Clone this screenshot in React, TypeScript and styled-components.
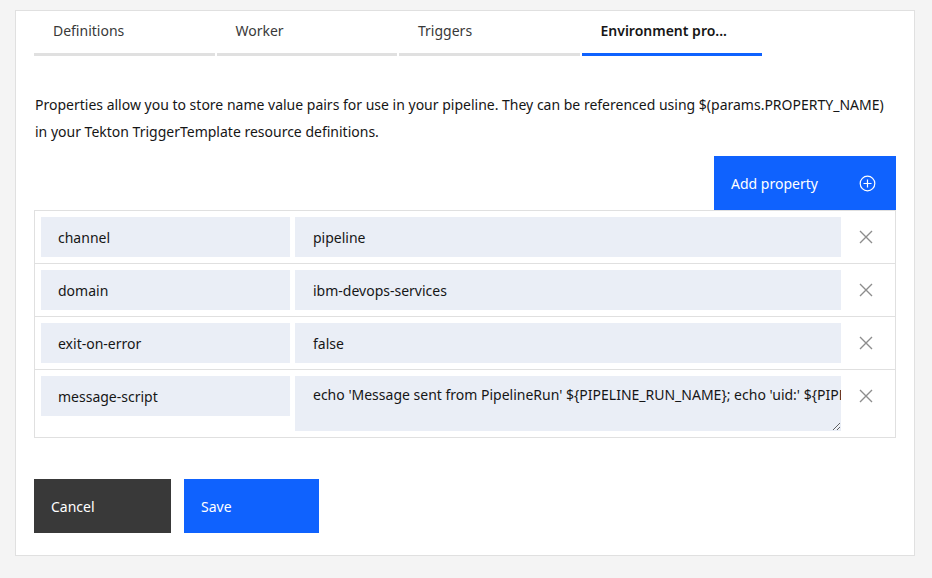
import React from "react";
import styled, { createGlobalStyle } from "styled-components";

const GlobalStyle = createGlobalStyle`
  html, body {
    margin: 0;
    padding: 0;
    background: #f4f4f4;
    font-family: "Noto Sans", "Open Sans", sans-serif;
    color: #161616;
  }
  * {
    box-sizing: border-box;
  }
`;

interface Property {
  name: string;
  value: string;
  multiline?: boolean;
}

const tabs = ["Definitions", "Worker", "Triggers", "Environment pro..."];

const properties: Property[] = [
  { name: "channel", value: "pipeline" },
  { name: "domain", value: "ibm-devops-services" },
  { name: "exit-on-error", value: "false" },
  {
    name: "message-script",
    value:
      "echo 'Message sent from PipelineRun' ${PIPELINE_RUN_NAME}; echo 'uid:' ${PIPELINE_RUN_ID}",
    multiline: true,
  },
];

function CloseIcon() {
  return (
    <svg width="16" height="16" viewBox="0 0 16 16" fill="none">
      <path d="M2 2L14 14M14 2L2 14" stroke="#8d8d8d" strokeWidth="1.4" />
    </svg>
  );
}

function AddIcon() {
  return (
    <svg width="17" height="17" viewBox="0 0 17 17" fill="none">
      <circle cx="8.5" cy="8.5" r="7.3" stroke="white" strokeWidth="1.2" />
      <path d="M8.5 4.5V12.5M4.5 8.5H12.5" stroke="white" strokeWidth="1.2" />
    </svg>
  );
}

export default function App() {
  return (
    <>
      <GlobalStyle />
      <Page>
        <Card>
          <TabList>
            {tabs.map((t, i) => (
              <Tab key={t} $active={i === 3}>
                {t}
              </Tab>
            ))}
          </TabList>
          <Description>
            Properties allow you to store name value pairs for use in your
            pipeline. They can be referenced using $(params.PROPERTY_NAME) in
            your Tekton TriggerTemplate resource definitions.
          </Description>
          <Toolbar>
            <AddButton>
              Add property
              <AddIcon />
            </AddButton>
          </Toolbar>
          <Table>
            {properties.map((p) => (
              <Row key={p.name}>
                <NameField>{p.name}</NameField>
                {p.multiline ? (
                  <ValueArea wrap="off" readOnly value={p.value} />
                ) : (
                  <ValueField>{p.value}</ValueField>
                )}
                <RemoveButton>
                  <CloseIcon />
                </RemoveButton>
              </Row>
            ))}
          </Table>
          <Actions>
            <ActionButton $kind="secondary">Cancel</ActionButton>
            <ActionButton $kind="primary">Save</ActionButton>
          </Actions>
        </Card>
      </Page>
    </>
  );
}

const Page = styled.div`
  padding: 10px 17px 22px 15px;
`;

const Card = styled.div`
  width: 900px;
  background: #ffffff;
  border: 1px solid #e0e0e0;
  padding: 0 18px 22px 18px;
`;

const TabList = styled.div`
  display: flex;
  gap: 2px;
`;

const Tab = styled.div<{ $active?: boolean }>`
  width: 180.5px;
  height: 45px;
  padding: 10px 0 0 19px;
  font-size: 14px;
  line-height: 20px;
  color: ${(p) => (p.$active ? "#161616" : "#393939")};
  font-weight: ${(p) => (p.$active ? 600 : 400)};
  border-bottom: 3px solid ${(p) => (p.$active ? "#0f62fe" : "#e0e0e0")};
  white-space: nowrap;
`;

const Description = styled.p`
  margin: 35px 0 0 1px;
  font-size: 14px;
  line-height: 27px;
  color: #161616;
  width: 862px;
`;

const Toolbar = styled.div`
  display: flex;
  justify-content: flex-end;
  width: 862px;
  margin-top: 11px;
`;

const AddButton = styled.button`
  display: flex;
  align-items: center;
  justify-content: space-between;
  width: 182px;
  height: 54px;
  padding: 0 20px 0 17px;
  border: none;
  background: #0f62fe;
  color: #ffffff;
  font-family: inherit;
  font-size: 14px;
  cursor: pointer;
`;

const Table = styled.div`
  width: 862px;
  border: 1px solid #e0e0e0;
`;

const Row = styled.div`
  display: grid;
  grid-template-columns: 249px 546px 1fr;
  column-gap: 5px;
  align-items: start;
  padding: 6px 0 6px 6px;
  & + & {
    border-top: 1px solid #e0e0e0;
  }
`;

const NameField = styled.div`
  height: 40px;
  display: flex;
  align-items: center;
  padding-left: 17px;
  background: #eaeef6;
  font-size: 14px;
  color: #161616;
`;

const ValueField = styled.div`
  height: 40px;
  display: flex;
  align-items: center;
  padding-left: 18px;
  background: #eaeef6;
  font-size: 14px;
  color: #161616;
  white-space: nowrap;
  overflow: hidden;
`;

const ValueArea = styled.textarea`
  display: block;
  width: 546px;
  height: 55px;
  margin: 0;
  padding: 9px 0 0 18px;
  border: none;
  outline: none;
  background: #eaeef6;
  font-family: inherit;
  font-size: 14px;
  line-height: 20px;
  color: #161616;
  overflow: hidden;
  resize: vertical;
`;

const RemoveButton = styled.button`
  height: 40px;
  display: flex;
  align-items: center;
  justify-content: flex-start;
  padding: 0 0 0 12px;
  border: none;
  background: none;
  cursor: pointer;
`;

const Actions = styled.div`
  display: flex;
  gap: 13px;
  margin-top: 41px;
`;

const ActionButton = styled.button<{ $kind: "primary" | "secondary" }>`
  width: ${(p) => (p.$kind === "primary" ? "135px" : "137px")};
  height: 54px;
  padding: 0 0 0 17px;
  text-align: left;
  border: none;
  background: ${(p) => (p.$kind === "primary" ? "#0f62fe" : "#393939")};
  color: #ffffff;
  font-family: inherit;
  font-size: 14px;
  cursor: pointer;
`;
